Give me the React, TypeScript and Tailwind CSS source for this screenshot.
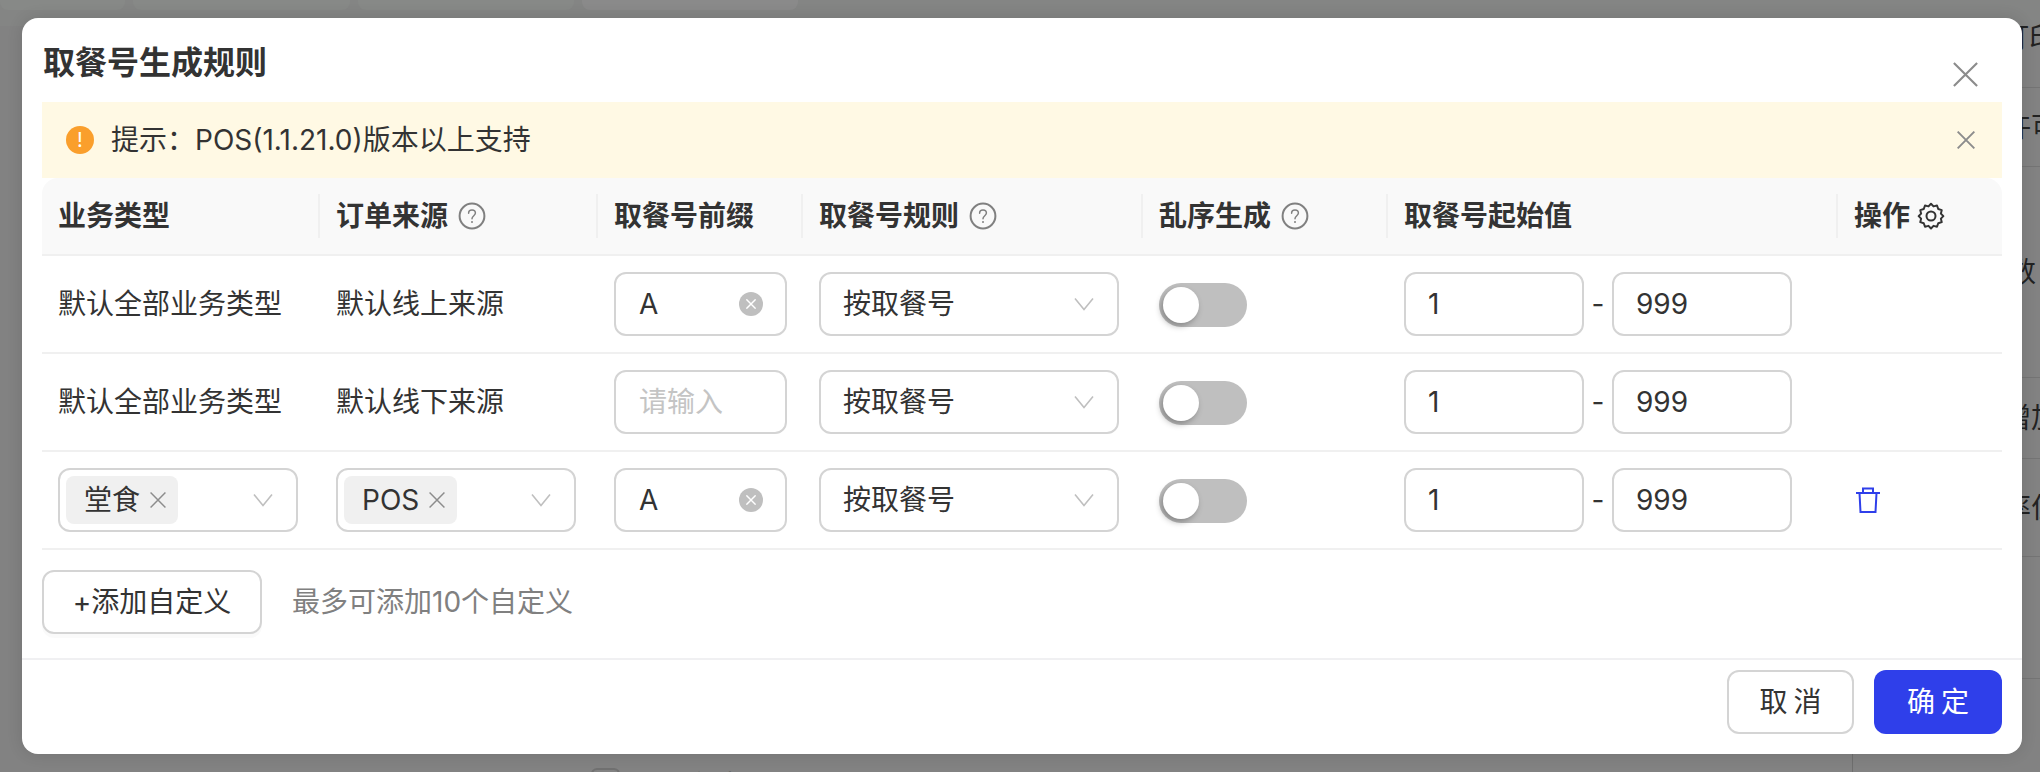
import React from "react";

const FONT = "[font-family:Inter,'Noto_Sans_CJK_SC',sans-serif]";

function Help() {
  return (
    <svg width="28" height="28" viewBox="0 0 28 28" fill="none" className="shrink-0">
      <circle cx="14" cy="14" r="12.4" stroke="#808080" strokeWidth="2" />
      <path d="M10.6 11.2c0-1.9 1.5-3.2 3.4-3.2s3.4 1.3 3.4 3.1c0 2.6-3.4 2.7-3.4 5.6" stroke="#808080" strokeWidth="1.5" strokeLinecap="round" />
      <circle cx="14" cy="20" r="1" fill="#808080" />
    </svg>
  );
}

function Chevron() {
  return (
    <svg width="20" height="14" viewBox="0 0 20 14" fill="none" className="shrink-0">
      <path d="M1 1.5 10 12.5 19 1.5" stroke="#bfbfbf" strokeWidth="1.6" />
    </svg>
  );
}

function X({ size, color, width }: { size: number; color: string; width: number }) {
  return (
    <svg width={size} height={size} viewBox="0 0 28 28" fill="none" className="shrink-0">
      <path d="M1 1 27 27M27 1 1 27" stroke={color} strokeWidth={width} />
    </svg>
  );
}

function ClearDot() {
  return (
    <span className="flex h-6 w-6 items-center justify-center rounded-full bg-[#bfbfbf]">
      <X size={10} color="#fff" width={4} />
    </span>
  );
}

function Head({ w, label, help, last, gear }: { w: string; label: string; help?: boolean; last?: boolean; gear?: boolean }) {
  return (
    <div className={`${w} flex h-11 items-center px-4 ${gear ? "gap-[6px]" : "gap-[10px]"} ${last ? "" : "border-r-2 border-[#f0f0f0]"}`}>
      <span className="text-[28px] font-semibold leading-[40px] text-[#333]">{label}</span>
      {help && <Help />}
      {gear && (
        <svg width="30" height="30" viewBox="0 0 24 24" fill="none" stroke="#333" strokeWidth="1.6" strokeLinejoin="round">
          <path d="M12 2.2l2 2.1 2.8-.7 1 2.8 2.8.9-.7 2.8 2 2-2 2 .7 2.8-2.8.9-1 2.8-2.8-.7-2 2.1-2-2.1-2.8.7-1-2.8-2.8-.9.7-2.8-2-2 2-2-.7-2.8 2.8-.9 1-2.8 2.8.7z" />
          <circle cx="12" cy="12" r="3.6" />
        </svg>
      )}
    </div>
  );
}

function Box({ w, children }: { w: string; children: React.ReactNode }) {
  return (
    <div className={`${w} flex h-16 shrink-0 items-center rounded-xl border-2 border-[#d4d4d4] bg-white text-[28px] text-[#333]`}>
      {children}
    </div>
  );
}

function Tag({ label }: { label: string }) {
  return (
    <div className="ml-[6px] flex h-12 items-center gap-[10px] rounded-lg bg-[#f0f0f0] pl-[18px] pr-[12px]">
      <span className="text-[28px] leading-none text-[#333]">{label}</span>
      <X size={16} color="#8c8c8c" width={2.6} />
    </div>
  );
}

function Row({ first, second, prefix, del }: { first: React.ReactNode; second: React.ReactNode; prefix: boolean; del?: boolean }) {
  return (
    <div className="flex h-[98px] items-center border-b-2 border-[#f0f0f0] text-[28px] text-[#333]">
      <div className="flex w-[278px] items-center pl-4">{first}</div>
      <div className="flex w-[278px] items-center pl-4">{second}</div>
      <div className="flex w-[205px] items-center pl-4">
        <Box w="w-[173px]">
          {prefix ? (
            <div className="flex w-full items-center justify-between pl-[23px] pr-[22px]">
              <span>A</span>
              <ClearDot />
            </div>
          ) : (
            <span className="pl-[23px] text-[#c4c4c4]">请输入</span>
          )}
        </Box>
      </div>
      <div className="flex w-[340px] items-center pl-4">
        <Box w="w-[300px]">
          <div className="flex w-full items-center justify-between pl-[22px] pr-[23px]">
            <span>按取餐号</span>
            <Chevron />
          </div>
        </Box>
      </div>
      <div className="flex w-[245px] items-center pl-4">
        <div className="mt-[2px] h-11 w-[88px] rounded-full bg-[#bfbfbf] p-1">
          <div className="h-9 w-9 rounded-full bg-white shadow-[-2px_3px_6px_rgba(0,0,0,0.3)]" />
        </div>
      </div>
      <div className="flex w-[450px] items-center pl-4">
        <Box w="w-[180px]"><span className="pl-[22px]">1</span></Box>
        <span className="w-7 text-center">-</span>
        <Box w="w-[180px]"><span className="pl-[22px]">999</span></Box>
      </div>
      <div className="flex w-[164px] items-center pl-[18px]">
        {del && (
          <svg width="24" height="26" viewBox="0 0 24 26" fill="none" stroke="#2f3fea" strokeWidth="2">
            <path d="M0 6H24M3.5 6l1 19H19.5l1-19M7 6V1.5h10V6" />
          </svg>
        )}
      </div>
    </div>
  );
}

function PageBehind() {
  return (
    <div className="flex h-full flex-col">
      <div className="flex h-[26px] gap-2 bg-[#848584]">
        <div className="h-[10px] w-[125px] rounded-b-lg bg-[#878987]" />
        <div className="h-[10px] w-[217px] rounded-b-lg bg-[#878987]" />
        <div className="h-[10px] w-[216px] rounded-b-lg bg-[#878987]" />
        <div className="h-[10px] w-[216px] rounded-b-lg bg-[#8a8a8a]" />
      </div>
      <div className="flex flex-1 bg-[#828282]">
        <div className="flex flex-1 flex-col justify-end overflow-hidden border-r border-[#6e6e6e]">
          <div className="flex h-[4px] items-center gap-4 pl-[591px]">
            <div className="h-7 w-[29px] shrink-0 translate-y-3 rounded-md border-2 border-[#707070]" />
            <span className="translate-y-4 pl-6 text-[28px] text-[#222]">业务类型</span>
          </div>
        </div>
        <div className="flex w-[187px] flex-col text-[28px] leading-none text-[#222]">
          <div className="flex h-[62px] items-start whitespace-nowrap border-b border-[#747474] pl-[148px] leading-[24px]">打印</div>
          <div className="flex h-[79px] items-center whitespace-nowrap border-b border-[#747474] pl-[150px]">许可</div>
          <div className="flex h-[211px] items-center whitespace-nowrap border-b border-[#747474] pl-[155px]">数</div>
          <div className="flex h-[81px] items-center whitespace-nowrap border-b border-[#747474] pl-[150px]">增加</div>
          <div className="flex h-[98px] items-center whitespace-nowrap border-b border-[#747474] pl-[150px]">率位</div>
          <div className="h-[122px] border-b border-[#747474]" />
        </div>
      </div>
    </div>
  );
}

export default function App() {
  return (
    <div className={`${FONT} relative h-[772px] w-[2040px] overflow-hidden`}>
      <PageBehind />
      <div className="absolute left-[22px] top-[18px] flex h-[736px] w-[2000px] flex-col rounded-2xl bg-white shadow-[0_0_16px_rgba(0,0,0,0.12)]">
        <div className="flex h-[84px] items-center justify-between pl-[21px] pr-[44px]">
          <h1 className="pt-[6px] text-[32px] font-semibold leading-[44px] text-[#333]">取餐号生成规则</h1>
          <div className="pt-[28px]"><X size={25} color="#8c8c8c" width={2.4} /></div>
        </div>

        <div className="mx-5 flex h-[76px] items-center justify-between bg-[#fff9e4] pl-6 pr-[27px]">
          <div className="flex items-center gap-[17px] text-[28px] text-[#333]">
            <span className="flex h-7 w-7 items-center justify-center rounded-full bg-[#fa9f2c] text-[20px] leading-none text-white">!</span>
            <span>提示：POS(1.1.21.0)版本以上支持</span>
          </div>
          <X size={18} color="#8c8c8c" width={3} />
        </div>

        <div className="mx-5">
          <div className="flex h-[78px] items-center rounded-t-2xl border-b-2 border-[#f0f0f0] bg-[#f9f9f9]">
            <Head w="w-[278px]" label="业务类型" />
            <Head w="w-[278px]" label="订单来源" help />
            <Head w="w-[205px]" label="取餐号前缀" />
            <Head w="w-[340px]" label="取餐号规则" help />
            <Head w="w-[245px]" label="乱序生成" help />
            <Head w="w-[450px]" label="取餐号起始值" />
            <Head w="w-[164px]" label="操作" gear last />
          </div>
          <Row first="默认全部业务类型" second="默认线上来源" prefix />
          <Row first="默认全部业务类型" second="默认线下来源" prefix={false} />
          <Row
            del
            prefix
            first={
              <Box w="w-[240px]">
                <div className="flex w-full items-center justify-between pr-[23px]"><Tag label="堂食" /><Chevron /></div>
              </Box>
            }
            second={
              <Box w="w-[240px]">
                <div className="flex w-full items-center justify-between pr-[23px]"><Tag label="POS" /><Chevron /></div>
              </Box>
            }
          />
          <div className="flex items-center gap-[30px] pt-5">
            <button className="h-16 w-[220px] rounded-xl border-2 border-[#d4d4d4] bg-white text-[28px] text-[#333] shadow-[0_4px_0_rgba(0,0,0,0.02)]">+添加自定义</button>
            <span className="text-[28px] text-[#808080]">最多可添加10个自定义</span>
          </div>
        </div>

        <div className="mt-6 flex flex-1 items-start justify-end gap-[20px] border-t-2 border-[#f0f0f2] pr-5 pt-[10px]">
          <button className="h-16 w-[127px] rounded-xl border-2 border-[#d4d4d4] bg-white pl-[6px] text-[28px] tracking-[6px] text-[#333]">取消</button>
          <button className="h-16 w-[128px] rounded-xl bg-[#2f3fea] pl-[6px] text-[28px] tracking-[6px] text-white">确定</button>
        </div>
      </div>
    </div>
  );
}
